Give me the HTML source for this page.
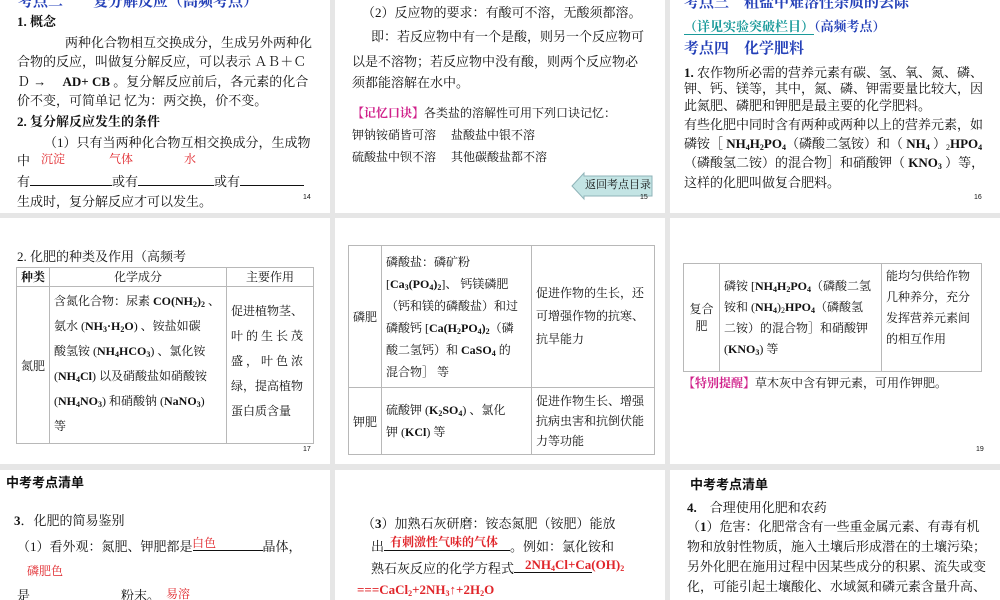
<!DOCTYPE html>
<html><head><meta charset="utf-8"><style>
*{margin:0;padding:0;box-sizing:border-box}
body{width:1000px;height:600px;background:#e6e6e6;position:relative;overflow:hidden;font-family:"Liberation Serif","Noto Serif CJK SC","Noto Sans CJK SC",serif;color:#111}
.s{position:absolute;background:#fff;overflow:hidden}
.t{position:absolute;white-space:nowrap;font-size:13px;line-height:18px}
.b{font-weight:bold}
.blue{color:#2440b8;font-weight:bold}
.red{color:#e0252a}
.mag{color:#d0208a;font-weight:bold}
.pg{position:absolute;font-size:7px;font-family:"Liberation Sans",sans-serif}
.ul{display:inline-block;border-bottom:1px solid #111;height:13px;vertical-align:baseline}
table{position:absolute;border-collapse:collapse;font-size:12px}
td{border:1px solid #b8b8b8;padding:0 4px;vertical-align:middle}
sub{font-size:8px;vertical-align:-2px;line-height:0}
</style></head><body>

<!-- Row 1 -->
<div class="s" style="left:0;top:0;width:330px;height:213px">
 <div class="t blue" style="left:18px;top:-7px;font-size:15px">考点二　　复分解反应（高频考点）</div>
 <div class="t b" style="left:17px;top:13px">1. 概念</div>
 <div class="t" style="left:65px;top:34px">两种化合物相互交换成分，生成另外两种化</div>
 <div class="t" style="left:17px;top:53px">合物的反应，叫做复分解反应，可以表示 ＡＢ＋Ｃ</div>
 <div class="t" style="left:17px;top:73px">Ｄ →　 <b>AD+ CB</b> 。复分解反应前后，各元素的化合</div>
 <div class="t" style="left:17px;top:92px">价不变，可简单记 忆为：两交换，价不变。</div>
 <div class="t b" style="left:17px;top:113px">2. 复分解反应发生的条件</div>
 <div class="t" style="left:44px;top:134px">（1）只有当两种化合物互相交换成分，生成物</div>
 <div class="t" style="left:17px;top:152px">中</div>
 <div class="t red" style="left:41px;top:150px;font-size:12px">沉淀</div>
 <div class="t red" style="left:109px;top:150px;font-size:12px">气体</div>
 <div class="t red" style="left:184px;top:150px;font-size:12px">水</div>
 <div class="t" style="left:17px;top:173px">有<span class="ul" style="width:82px"></span>或有<span class="ul" style="width:76px"></span>或有<span class="ul" style="width:64px"></span></div>
 <div class="t" style="left:17px;top:193px">生成时，复分解反应才可以发生。</div>
 <div class="pg" style="left:303px;top:194px">14</div>
</div>

<div class="s" style="left:335px;top:0;width:330px;height:213px">
 <div class="t" style="left:27px;top:4px">（2）反应物的要求：有酸可不溶，无酸须都溶。</div>
 <div class="t" style="left:36px;top:28px">即：若反应物中有一个是酸，则另一个反应物可</div>
 <div class="t" style="left:17px;top:53px">以是不溶物；若反应物中没有酸，则两个反应物必</div>
 <div class="t" style="left:17px;top:74px">须都能溶解在水中。</div>
 <div class="t" style="left:17px;top:104px;font-size:12px"><span class="mag">【记忆口诀】</span>各类盐的溶解性可用下列口诀记忆：</div>
 <div class="t" style="left:17px;top:126px;font-size:12px">钾钠铵硝皆可溶　 盐酸盐中银不溶</div>
 <div class="t" style="left:17px;top:148px;font-size:12px">硫酸盐中钡不溶　 其他碳酸盐都不溶</div>
 <svg style="position:absolute;left:236px;top:171px" width="86" height="30"><polygon points="1,15 13,2 13,5 81,5 81,25 13,25 13,28" fill="#c3e4e4" stroke="#8fb3b8" stroke-width="1"/></svg>
 <div class="t" style="left:250px;top:176px;font-size:11px">返回考点目录</div>
 <div class="pg" style="left:305px;top:194px">15</div>
</div>

<div class="s" style="left:670px;top:0;width:330px;height:213px">
 <div class="t blue" style="left:14px;top:-6px;font-size:15px">考点三　粗盐中难溶性杂质的去除</div>
 <div class="t" style="left:14px;top:18px;font-size:13px"><span style="color:#1a9a9a;font-weight:bold;border-bottom:1px solid #1a9a9a">（详见实验突破栏目）</span><span class="blue">（高频考点）</span></div>
 <div class="t blue" style="left:14px;top:40px;font-size:15px">考点四　化学肥料</div>
 <div class="t" style="left:14px;top:64px"><b>1.</b> 农作物所必需的营养元素有碳、氢、氧、氮、磷、</div>
 <div class="t" style="left:14px;top:80px">钾、钙、镁等，其中，氮、磷、钾需要量比较大，因</div>
 <div class="t" style="left:14px;top:97px">此氮肥、磷肥和钾肥是最主要的化学肥料。</div>
 <div class="t" style="left:14px;top:116px">有些化肥中同时含有两种或两种以上的营养元素，如</div>
 <div class="t" style="left:14px;top:135px">磷铵［ <b>NH<sub>4</sub>H<sub>2</sub>PO<sub>4</sub></b>（磷酸二氢铵）和（ <b>NH<sub>4</sub></b> ）<sub>2</sub><b>HPO<sub>4</sub></b></div>
 <div class="t" style="left:14px;top:154px">（磷酸氢二铵）的混合物］和硝酸钾（ <b>KNO<sub>3</sub></b> ）等，</div>
 <div class="t" style="left:14px;top:174px">这样的化肥叫做复合肥料。</div>
 <div class="pg" style="left:304px;top:194px">16</div>
</div>

<!-- Row 2 -->
<div class="s" style="left:0;top:218px;width:330px;height:246px">
 <div class="t" style="left:17px;top:30px">2. 化肥的种类及作用（高频考</div>
 <table style="left:16px;top:49px;width:298px">
  <tr style="height:19px"><td style="width:33px;line-height:17px;text-align:center" class="b">种类</td><td style="width:177px;line-height:17px;text-align:center">化学成分</td><td style="line-height:17px;text-align:center">主要作用</td></tr>
  <tr style="height:157px"><td style="text-align:center;padding:0 2px">氮肥</td>
  <td style="line-height:25px;vertical-align:top;padding-top:2px">含氮化合物：尿素 <b>CO(NH<sub>2</sub>)<sub>2</sub></b> 、<br>氨水 (<b>NH<sub>3</sub>·H<sub>2</sub>O</b>) 、铵盐如碳<br>酸氢铵 (<b>NH<sub>4</sub>HCO<sub>3</sub></b>) 、氯化铵<br>(<b>NH<sub>4</sub>Cl</b>) 以及硝酸盐如硝酸铵<br>(<b>NH<sub>4</sub>NO<sub>3</sub></b>) 和硝酸钠 (<b>NaNO<sub>3</sub></b>)<br>等</td>
  <td style="line-height:25px;vertical-align:top;padding-top:12px">促进植物茎、<br>叶 的 生 长 茂<br>盛 ， 叶 色 浓<br>绿，提高植物<br>蛋白质含量</td></tr>
 </table>
 <div class="pg" style="left:303px;top:228px">17</div>
</div>

<div class="s" style="left:335px;top:218px;width:330px;height:246px">
 <table style="left:13px;top:27px;width:307px">
  <tr style="height:142px"><td style="width:33px;text-align:center;padding:0 2px">磷肥</td>
  <td style="width:150px;line-height:22px">磷酸盐：磷矿粉<br>[<b>Ca<sub>3</sub>(PO<sub>4</sub>)<sub>2</sub></b>]、 钙镁磷肥<br>（钙和镁的磷酸盐）和过<br>磷酸钙 [<b>Ca(H<sub>2</sub>PO<sub>4</sub>)<sub>2</sub></b>（磷<br>酸二氢钙）和 <b>CaSO<sub>4</sub></b> 的<br>混合物］ 等</td>
  <td style="line-height:23px">促进作物的生长，还<br>可增强作物的抗寒、<br>抗旱能力</td></tr>
  <tr style="height:67px"><td style="text-align:center;padding:0 2px">钾肥</td>
  <td style="line-height:22px">硫酸钾 (<b>K<sub>2</sub>SO<sub>4</sub></b>) 、氯化<br>钾 (<b>KCl</b>) 等</td>
  <td style="line-height:20px">促进作物生长、增强<br>抗病虫害和抗倒伏能<br>力等功能</td></tr>
 </table>
</div>

<div class="s" style="left:670px;top:218px;width:330px;height:246px">
 <table style="left:13px;top:45px;width:299px">
  <tr style="height:108px"><td style="width:36px;text-align:center;line-height:17px;padding:0 2px">复合<br>肥</td>
  <td style="width:162px;line-height:21px">磷铵 [<b>NH<sub>4</sub>H<sub>2</sub>PO<sub>4</sub></b>（磷酸二氢<br>铵和 (<b>NH<sub>4</sub></b>)<sub>2</sub><b>HPO<sub>4</sub></b>（磷酸氢<br>二铵）的混合物］和硝酸钾<br>(<b>KNO<sub>3</sub></b>) 等</td>
  <td style="line-height:21px;vertical-align:top;padding-top:2px">能均匀供给作物<br>几种养分，充分<br>发挥营养元素间<br>的相互作用</td></tr>
 </table>
 <div class="t" style="left:13px;top:156px;font-size:12px"><span class="mag">【特别提醒】</span>草木灰中含有钾元素，可用作钾肥。</div>
 <div class="pg" style="left:306px;top:228px">19</div>
</div>

<!-- Row 3 -->
<div class="s" style="left:0;top:470px;width:330px;height:130px">
 <div class="t b" style="left:6px;top:4px;font-family:'Liberation Sans','Noto Sans CJK SC',sans-serif">中考考点清单</div>
 <div class="t" style="left:14px;top:42px"><b>3</b>．化肥的简易鉴别</div>
 <div class="t" style="left:17px;top:68px">（1）看外观：氮肥、钾肥都是<span class="ul" style="width:70px"></span>晶体，</div>
 <div class="t red" style="left:192px;top:64px;font-size:12px">白色</div>
 <div class="t red" style="left:27px;top:92px;font-size:12px">磷肥色</div>
 <div class="t" style="left:17px;top:117px">是　　　　　　　粉末。</div>
 <div class="t red" style="left:166px;top:115px;font-size:12px">易溶</div>
</div>

<div class="s" style="left:335px;top:470px;width:330px;height:130px">
 <div class="t" style="left:27px;top:45px">（<b>3</b>）加熟石灰研磨：铵态氮肥（铵肥）能放</div>
 <div class="t" style="left:36px;top:68px">出<span class="ul" style="width:126px"></span>。例如：氯化铵和</div>
 <div class="t red b" style="left:55px;top:63px;font-size:12px">有刺激性气味的气体</div>
 <div class="t" style="left:36px;top:90px">熟石灰反应的化学方程式<span class="ul" style="width:78px"></span></div>
 <div class="t red b" style="left:190px;top:86px">2NH<sub>4</sub>Cl+Ca(OH)<sub>2</sub></div>
 <div class="t red b" style="left:22px;top:111px">===CaCl<sub>2</sub>+2NH<sub>3</sub>↑+2H<sub>2</sub>O</div>
</div>

<div class="s" style="left:670px;top:470px;width:330px;height:130px">
 <div class="t b" style="left:20px;top:6px;font-family:'Liberation Sans','Noto Sans CJK SC',sans-serif">中考考点清单</div>
 <div class="t" style="left:17px;top:29px"><b>4.</b>　合理使用化肥和农药</div>
 <div class="t" style="left:17px;top:48px">（<b>1</b>）危害：化肥常含有一些重金属元素、有毒有机</div>
 <div class="t" style="left:17px;top:68px">物和放射性物质，施入土壤后形成潜在的土壤污染；</div>
 <div class="t" style="left:17px;top:88px">另外化肥在施用过程中因某些成分的积累、流失或变</div>
 <div class="t" style="left:17px;top:108px">化，可能引起土壤酸化、水域氮和磷元素含量升高、</div>
</div>

</body></html>
